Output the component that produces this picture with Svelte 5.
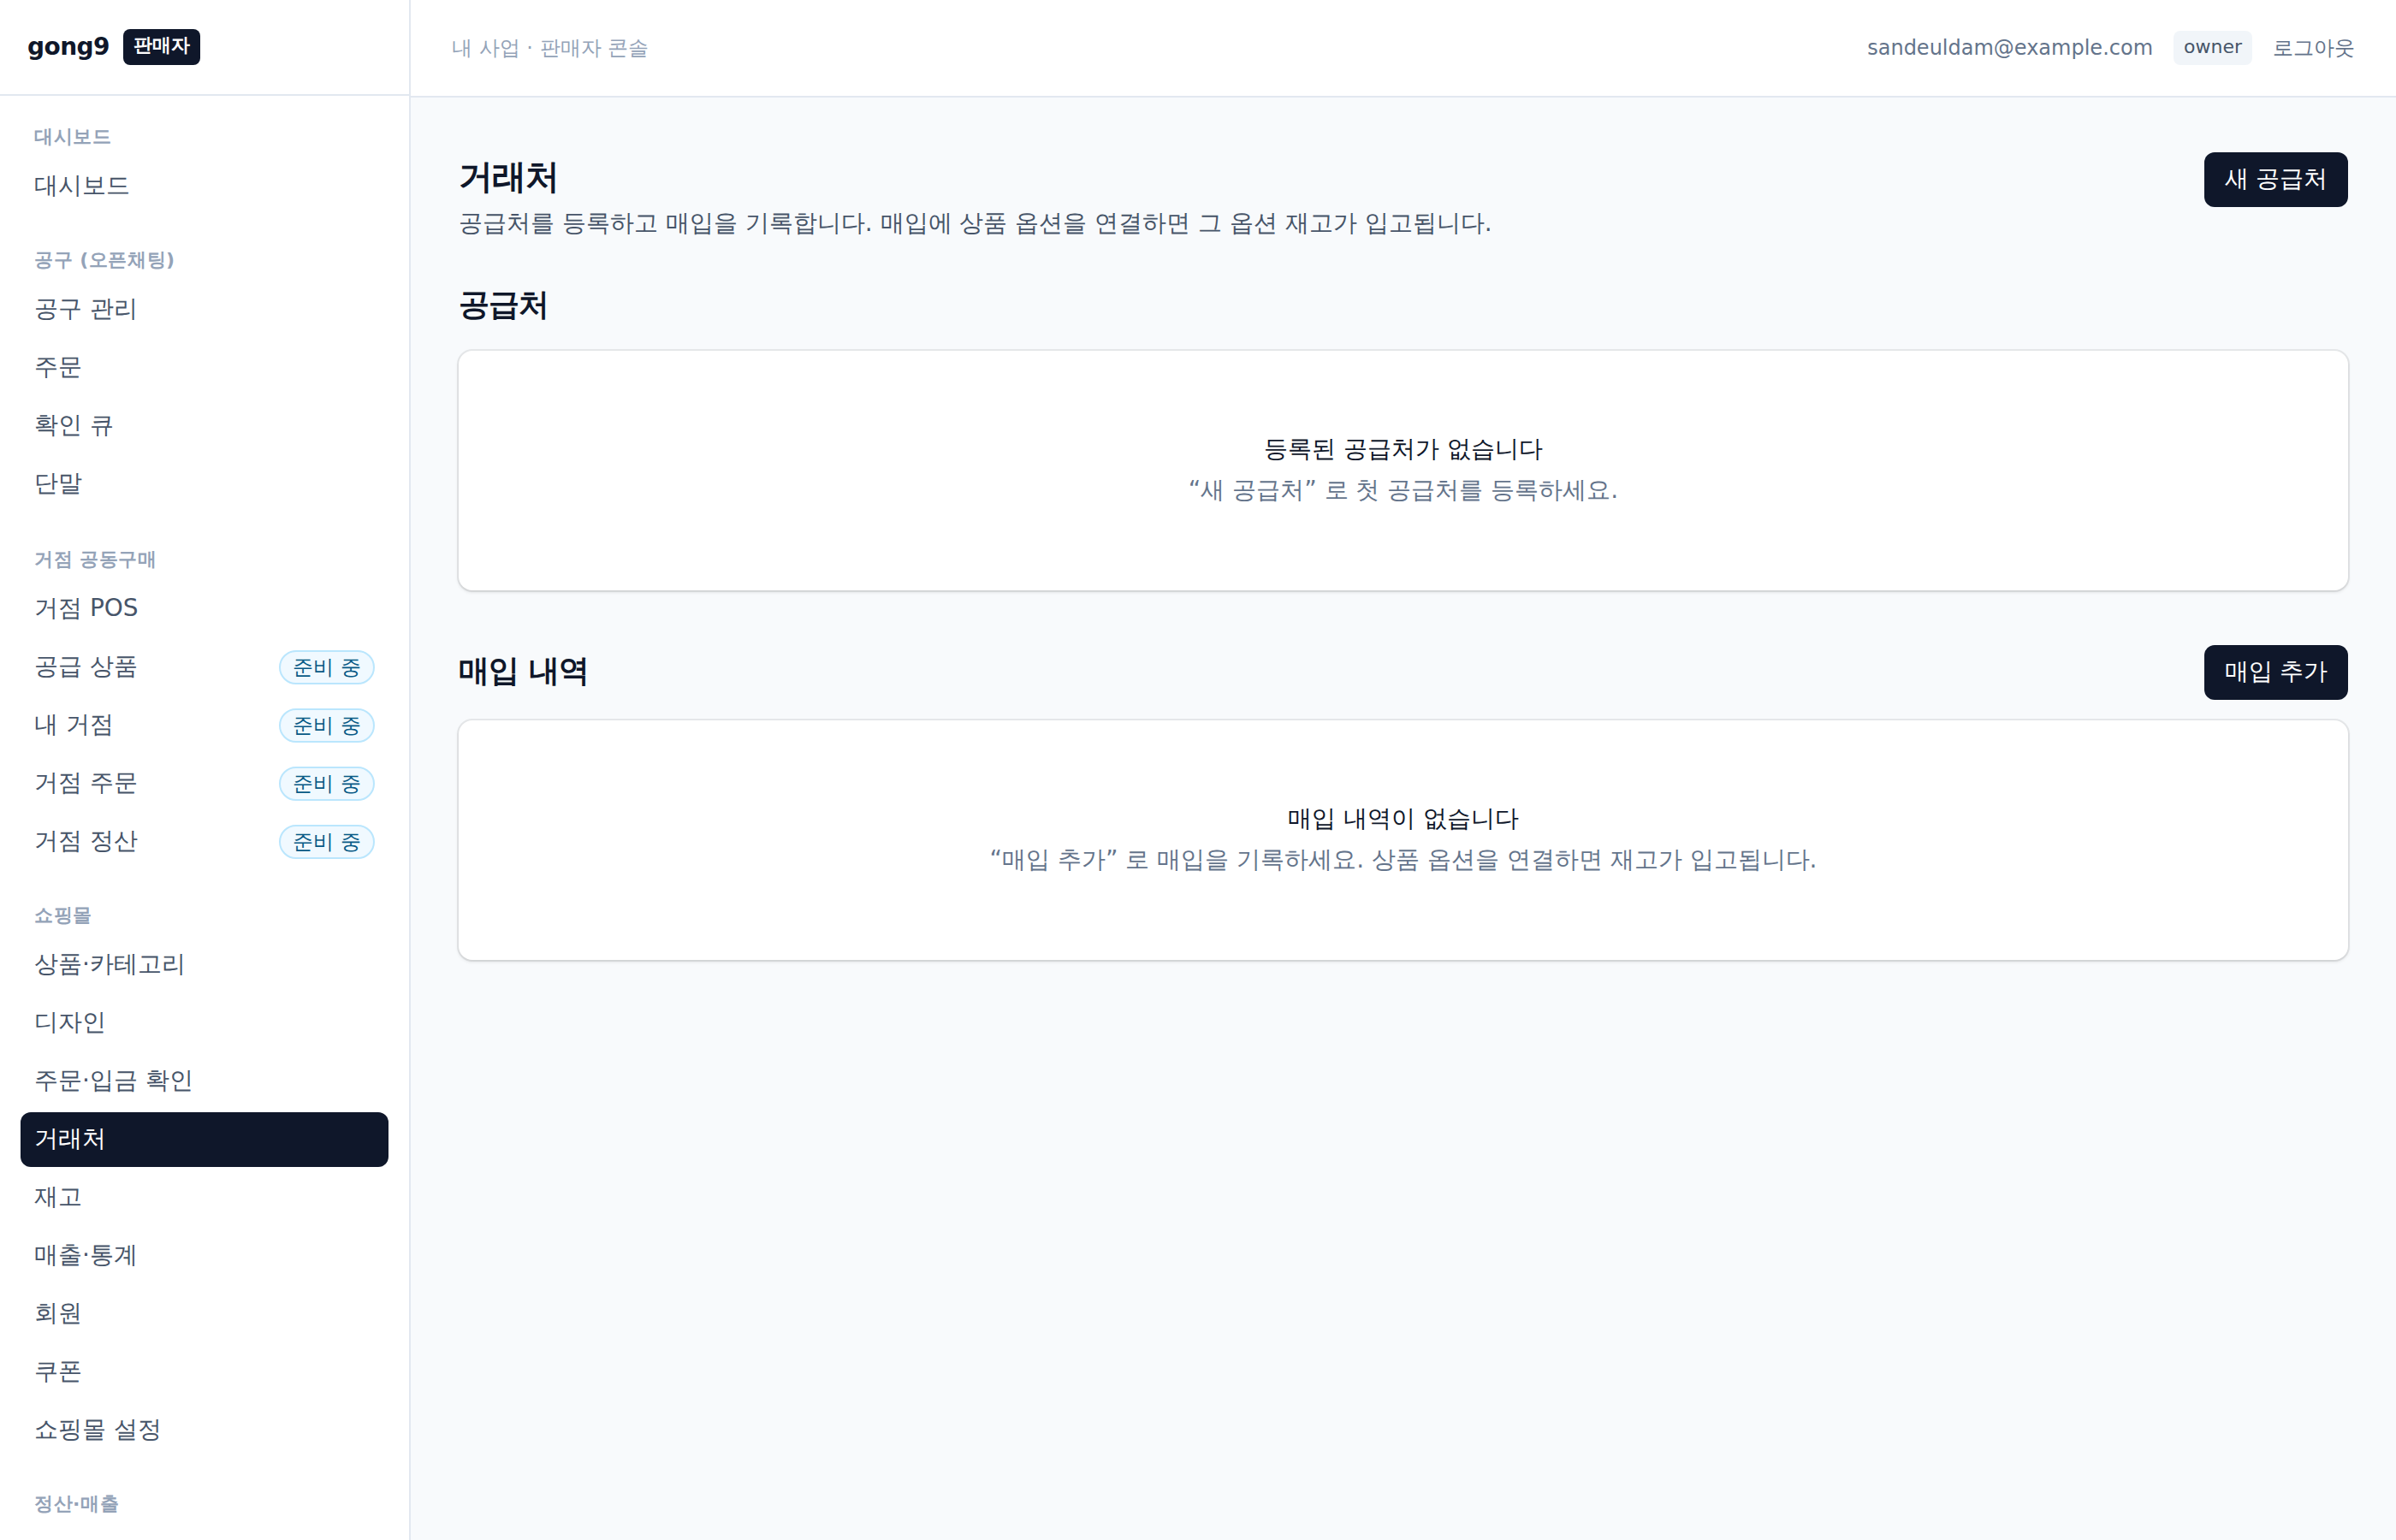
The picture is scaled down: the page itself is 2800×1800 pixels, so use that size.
<script lang="ts">
	type Item = { label: string; soon?: boolean };
	type Group = { title: string; items: Item[] };

	const groups: Group[] = [
		{ title: '대시보드', items: [{ label: '대시보드' }] },
		{
			title: '공구 (오픈채팅)',
			items: [{ label: '공구 관리' }, { label: '주문' }, { label: '확인 큐' }, { label: '단말' }]
		},
		{
			title: '거점 공동구매',
			items: [
				{ label: '거점 POS' },
				{ label: '공급 상품', soon: true },
				{ label: '내 거점', soon: true },
				{ label: '거점 주문', soon: true },
				{ label: '거점 정산', soon: true }
			]
		},
		{
			title: '쇼핑몰',
			items: [
				{ label: '상품·카테고리' },
				{ label: '디자인' },
				{ label: '주문·입금 확인' },
				{ label: '거래처' },
				{ label: '재고' },
				{ label: '매출·통계' },
				{ label: '회원' },
				{ label: '쿠폰' },
				{ label: '쇼핑몰 설정' }
			]
		},
		{ title: '정산·매출', items: [] }
	];

	let current = $state('거래처');
</script>

<div class="shell">
	<aside class="sidebar">
		<div class="brand">
			<strong>gong9</strong>
			<span class="brand-tag">판매자</span>
		</div>
		<nav>
			{#each groups as group}
				<section class="group">
					<h3>{group.title}</h3>
					<div class="links">
						{#each group.items as item}
							<button
								class="link"
								class:active={item.label === current}
								onclick={() => (current = item.label)}
							>
								<span class="link-label">{item.label}</span>
								{#if item.soon}
									<span class="soon">준비 중</span>
								{/if}
							</button>
						{/each}
					</div>
				</section>
			{/each}
		</nav>
	</aside>

	<div class="main">
		<header class="topbar">
			<span class="crumb">내 사업 · 판매자 콘솔</span>
			<div class="account">
				<span>sandeuldam@example.com</span>
				<span class="role">owner</span>
				<button class="logout">로그아웃</button>
			</div>
		</header>

		<main class="content">
			<div class="page-head">
				<div>
					<h1>거래처</h1>
					<p>공급처를 등록하고 매입을 기록합니다. 매입에 상품 옵션을 연결하면 그 옵션 재고가 입고됩니다.</p>
				</div>
				<button class="primary">새 공급처</button>
			</div>

			<h2 class="suppliers-title">공급처</h2>
			<div class="card">
				<p>등록된 공급처가 없습니다</p>
				<p class="empty-text">“새 공급처” 로 첫 공급처를 등록하세요.</p>
			</div>

			<div class="section-head">
				<h2>매입 내역</h2>
				<button class="primary">매입 추가</button>
			</div>
			<div class="card">
				<p>매입 내역이 없습니다</p>
				<p class="empty-text">“매입 추가” 로 매입을 기록하세요. 상품 옵션을 연결하면 재고가 입고됩니다.</p>
			</div>
		</main>
	</div>
</div>

<style>
	:global(body) {
		margin: 0;
		overflow: hidden;
	}
	.shell {
		display: flex;
		height: 100vh;
		overflow: hidden;
		background: #f8fafc;
		color: #0f172a;
		font-family: 'DejaVu Sans', sans-serif;
		font-size: 28px;
		line-height: 48px;
	}
	h1,
	h2,
	h3,
	p {
		margin: 0;
	}
	button {
		border: 0;
		background: none;
		font: inherit;
		color: inherit;
		cursor: pointer;
	}

	/* sidebar */
	.sidebar {
		box-sizing: border-box;
		flex: 0 0 480px;
		background: #fff;
		border-right: 2px solid #e2e8f0;
	}
	.brand {
		box-sizing: border-box;
		height: 112px;
		padding: 0 32px;
		display: flex;
		align-items: center;
		gap: 16px;
		border-bottom: 2px solid #e2e8f0;
	}
	.brand strong {
		font-size: 28px;
		font-weight: 700;
		letter-spacing: -0.02em;
	}
	.brand-tag {
		padding: 1px 12px 5px;
		border-radius: 8px;
		background: #0f172a;
		color: #fff;
		font-size: 22px;
		font-weight: 600;
		line-height: 36px;
	}
	nav {
		padding: 22px 24px;
		display: flex;
		flex-direction: column;
		gap: 28px;
	}
	.group:nth-child(3) {
		margin-top: 2px;
	}
	.group h3 {
		padding: 8px 16px;
		color: #94a3b8;
		font-size: 22px;
		font-weight: 600;
		letter-spacing: 0.025em;
		line-height: 36px;
	}
	.links {
		display: flex;
		flex-direction: column;
		gap: 4px;
	}
	.link {
		height: 64px;
		padding: 0 16px;
		display: flex;
		align-items: center;
		justify-content: space-between;
		border-radius: 12px;
		color: #475569;
	}
	.link.active {
		background: #0f172a;
		color: #fff;
	}
	.link-label {
		padding-bottom: 3px;
	}
	.soon {
		padding: 0 14px;
		border: 2px solid #bae6fd;
		border-radius: 20px;
		background: #f0f9ff;
		color: #075985;
		font-size: 24px;
		line-height: 36px;
	}

	/* top bar */
	.main {
		flex: 1;
		min-width: 0;
	}
	.topbar {
		height: 112px;
		padding: 0 48px;
		display: flex;
		align-items: center;
		justify-content: space-between;
		background: #fff;
		border-bottom: 2px solid #e2e8f0;
		font-size: 24px;
		line-height: 40px;
	}
	.crumb {
		color: #94a3b8;
	}
	.account {
		display: flex;
		align-items: center;
		gap: 24px;
		color: #64748b;
	}
	.role {
		padding: 1px 12px 3px;
		border-radius: 8px;
		background: #f1f5f9;
		color: #475569;
		font-size: 22px;
		line-height: 36px;
	}
	.logout {
		padding: 0;
	}

	/* content */
	.content {
		padding: 64px 56px;
	}
	.page-head,
	.section-head {
		display: flex;
		justify-content: space-between;
		align-items: flex-start;
	}
	h1 {
		font-size: 40px;
		font-weight: 700;
		letter-spacing: -0.025em;
		line-height: 56px;
	}
	h2 {
		font-size: 36px;
		font-weight: 700;
		letter-spacing: -0.025em;
		line-height: 56px;
	}
	.page-head p {
		padding: 3px 0 1px;
		color: #475569;
	}
	.primary {
		height: 64px;
		padding: 0 23.5px 2px;
		border-radius: 12px;
		background: #0f172a;
		color: #fff;
	}
	.suppliers-title {
		margin: 42px 0 26px;
	}
	.section-head {
		margin: 64px 0 24px;
	}
	.section-head h2 {
		padding: 2px 0 6px;
	}
	.card {
		box-sizing: border-box;
		height: 280px;
		padding-bottom: 2px;
		display: flex;
		flex-direction: column;
		align-items: center;
		justify-content: center;
		border-radius: 16px;
		background: #fff;
		box-shadow:
			0 0 0 2px rgba(9, 9, 11, 0.07),
			0 2px 4px rgba(0, 0, 0, 0.12);
	}
	.empty-text {
		color: #64748b;
	}
</style>
